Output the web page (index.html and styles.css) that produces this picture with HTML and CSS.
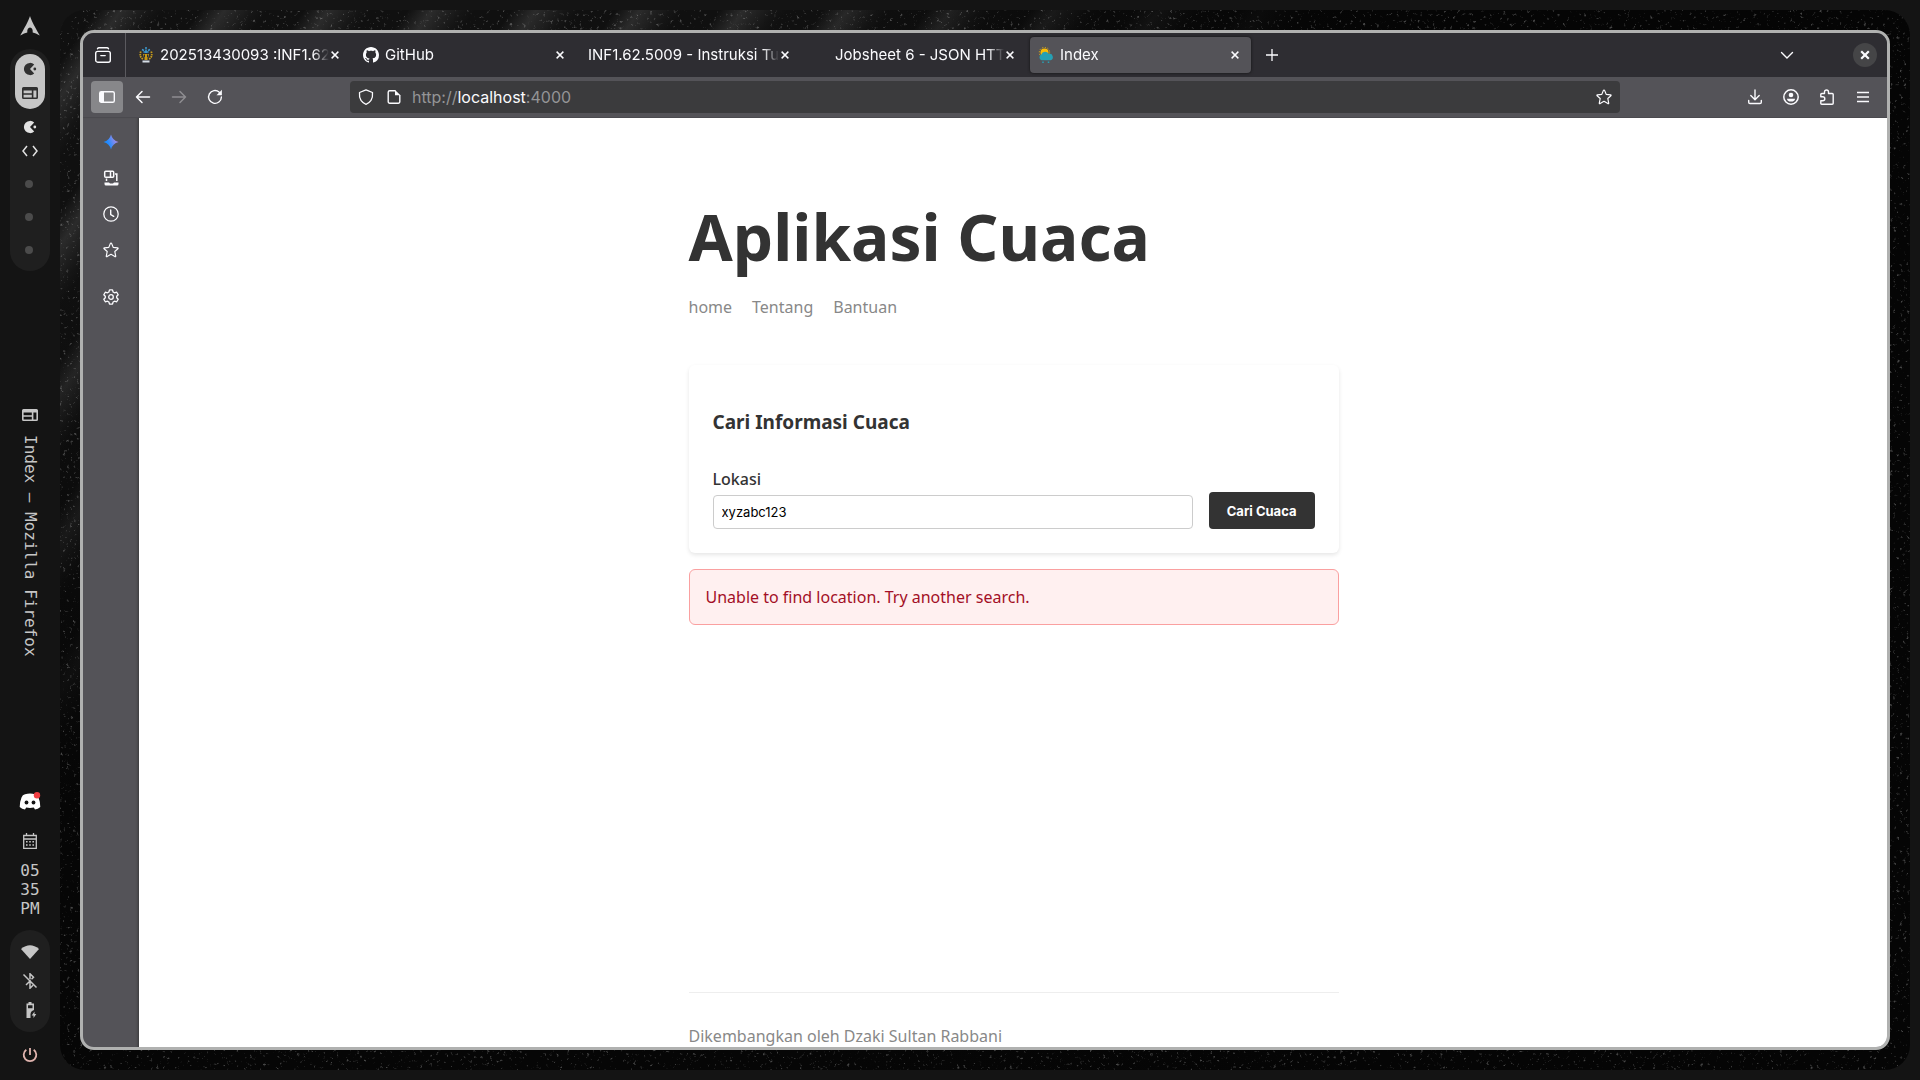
FILE: index.html
```html
<!DOCTYPE html>
<html lang="id">
<head>
<meta charset="utf-8">
<meta name="viewport" content="width=device-width, initial-scale=1">
<title>Index</title>
<link rel="stylesheet" href="styles.css">
</head>
<body class="desktop">
<svg class="defs" width="0" height="0" aria-hidden="true">
  <symbol id="i-close" viewBox="0 0 16 16"><path d="M3.500 3.500l9 9M12.500 3.500l-9 9" fill="none" stroke="currentColor" stroke-width="1.900"/></symbol>
  <symbol id="i-star" viewBox="0 0 16 16"><path d="M8 1.100Q8.500 1.100 8.700 1.600L10.200 5.400 14.600 5.800Q15.500 6 14.900 6.700L11.800 9.500 12.700 14Q12.800 15 11.900 14.600L8 12.300 4.100 14.600Q3.200 15 3.300 14L4.200 9.500 1.100 6.700Q.5 6 1.400 5.800L5.800 5.400 7.300 1.600Q7.500 1.100 8 1.100z" fill="none" stroke="currentColor" stroke-width="1.200" stroke-linejoin="round"/></symbol>
  <symbol id="i-pac" viewBox="0 0 16 16"><path d="M12.800 2.900A7 7 0 1 0 12.800 13.100L8 8z" fill="currentColor"/><circle cx="13.500" cy="8" r="1.600" fill="currentColor"/></symbol>
  <symbol id="i-web" viewBox="0 0 16 16"><path d="M1.500 2h13A1.500 1.500 0 0 1 16 3.500v9a1.500 1.500 0 0 1-1.500 1.500h-13A1.500 1.500 0 0 1 0 12.500v-9A1.500 1.500 0 0 1 1.500 2zM1.600 5.600v2.600h8.200V5.600zm0 4.100v2.700h8.200V9.700zm9.800-4.100v6.800h3V5.600z" fill="currentColor" fill-rule="evenodd"/></symbol>
</svg>

<aside class="bar">
  <div class="bar-group">
    <svg class="ic-20 arch" viewBox="0 0 20 20"><path d="M10 0C9 3 7.500 7 .2 19.500 3 17.800 5.200 16.800 7.300 16.400 7 14 8 11.600 10 11.600S13 14 12.700 16.400C14.800 16.800 17 17.800 19.800 19.500 12.500 7 11 3 10 0z" fill="currentColor"/></svg>
    <div class="workspaces">
      <div class="ws ws-active"><svg class="ic-14"><use href="#i-pac"/></svg><svg class="ic-16"><use href="#i-web"/></svg></div>
      <div class="ws"><svg class="ic-14"><use href="#i-pac"/></svg><svg class="ic-16" viewBox="0 0 16 16"><path d="M5 3L1 8l4 5M11 3l4 5-4 5" fill="none" stroke="currentColor" stroke-width="1.500"/></svg></div>
      <i class="dot"></i><i class="dot"></i><i class="dot"></i>
    </div>
  </div>
  <div class="task">
    <svg class="ic-16"><use href="#i-web"/></svg>
    <span class="task-title">Index — Mozilla Firefox</span>
  </div>
  <div class="bar-group">
    <svg class="ic-22 discord" viewBox="0 0 22 18"><path d="M6 2.200Q11 .6 16 2.200 18.500 2.500 19.500 5.500 21.500 10.500 21.300 15 19 17 16 17.500L14.800 15.600Q11 16.400 7.200 15.600L6 17.500Q3 17 .7 15 .5 10.500 2.500 5.500 3.500 2.500 6 2.200z" fill="#fff"/><circle cx="7.500" cy="10.500" r="1.900" fill="#141414"/><circle cx="14.500" cy="10.500" r="1.900" fill="#141414"/><circle cx="18" cy="3.200" r="3.200" fill="#f23f43"/></svg>
    <svg class="ic-16 calendar" viewBox="0 0 16 16"><path d="M1.700 2.500h12.600v12.800H1.700zM1.700 6h12.600M4.500 0v3M11.500 0v3" fill="none" stroke="currentColor" stroke-width="1.300"/><path d="M4 8.800h8M4 12h8" stroke="currentColor" stroke-width="1.500" stroke-dasharray="1.600 1.600"/></svg>
    <time class="clock"><span>05</span><span>35</span><span>PM</span></time>
    <div class="status">
      <svg class="ic-18" viewBox="0 0 18 16"><path d="M0 5Q9-2.500 18 5L9 15z" fill="currentColor"/></svg>
      <svg class="ic-16" viewBox="0 0 16 16"><path d="M1.500 1.500l13 13M8 6V.8l3.500 3.400-2 2M4 12l4-4v7.200l3-3" fill="none" stroke="currentColor" stroke-width="1.500"/></svg>
      <svg class="ic-16" viewBox="0 0 16 16"><path d="M6.500 0h3v1.500H12V8Q8.700 9 8.500 12v4H4.500V1.500h2zM6 3.200v3h4.500v-3z" fill="currentColor" fill-rule="evenodd"/><path d="M12.500 9.500L9.700 13.500h1.800v2.500l2.800-4h-1.800z" fill="currentColor"/></svg>
    </div>
    <svg class="ic-16 power" viewBox="0 0 16 16"><path d="M8 1v7M4.300 2.800a6.300 6.300 0 1 0 7.400 0" fill="none" stroke="currentColor" stroke-width="1.800"/></svg>
  </div>
</aside>

<div class="wallpaper">
  <svg class="grain" aria-hidden="true"><filter id="grain"><feTurbulence type="fractalNoise" baseFrequency="0.3" numOctaves="3" seed="7"/><feColorMatrix values="0 0 0 0 .7  0 0 0 0 .7  0 0 0 0 .7  5 0 0 0 -3.200"/></filter><rect width="100%" height="100%" filter="url(#grain)"/></svg>
  <div class="window">
    <header class="tabstrip">
      <button class="view" aria-label="Firefox View"><svg class="ic-16" viewBox="0 0 16 16"><rect x=".7" y="4.400" width="14.600" height="10.800" rx="2" fill="none" stroke="currentColor" stroke-width="1.400"/><path d="M2.500 1.800Q3 .8 4 .8h8q1 0 1.500 1M5.800 8.600h4.400" fill="none" stroke="currentColor" stroke-width="1.400" stroke-linecap="round"/></svg></button>
      <nav class="tabs">
        <div class="tab"><svg class="ic-16" viewBox="0 0 16 16"><path d="M4 2.500l2 1M7 1h2M10 3.500l2-1M5.500 5h5M8 2.500V6" stroke="#3d9bd1" stroke-width="1.500"/><path d="M2.800 4.500Q1 10 5 12M13.200 4.500Q15 10 11 12" fill="none" stroke="#c49a1c" stroke-width="1.800" stroke-dasharray="1.500 .8"/><path d="M5 7h6l-1 4H6zM6.500 11h3v2h-3z" fill="#c99a13"/><path d="M6.500 7.500v3M9.500 7.500v3" stroke="#27313a"/><path d="M4.500 14.500h7" stroke="#d6dde5" stroke-width="1.800"/></svg><span class="tab-label">202513430093 :INF1.62</span><button class="tab-close" aria-label="Close tab"><svg class="ic-12"><use href="#i-close"/></svg></button></div>
        <div class="tab"><svg class="ic-16" viewBox="0 0 16 16"><path fill="currentColor" d="M8 0C3.580 0 0 3.580 0 8c0 3.540 2.290 6.530 5.470 7.590.4.070.55-.17.55-.38 0-.19-.01-.82-.01-1.490-2.010.37-2.530-.49-2.690-.94-.09-.23-.48-.94-.82-1.130-.28-.15-.68-.52-.01-.53.63-.01 1.080.58 1.230.82.72 1.210 1.870.87 2.330.66.07-.52.28-.87.51-1.070-1.780-.2-3.640-.89-3.640-3.950 0-.87.31-1.590.82-2.150-.08-.2-.36-1.020.08-2.120 0 0 .67-.21 2.200.82.64-.18 1.320-.27 2-.27s1.360.09 2 .27c1.530-1.040 2.200-.82 2.200-.82.44 1.100.16 1.920.08 2.120.51.56.82 1.270.82 2.150 0 3.070-1.870 3.750-3.650 3.950.29.25.54.73.54 1.480 0 1.070-.01 1.930-.01 2.200 0 .21.15.46.55.38A8.010 8.010 0 0 0 16 8c0-4.420-3.580-8-8-8z"/></svg><span class="tab-label">GitHub</span><button class="tab-close" aria-label="Close tab"><svg class="ic-12"><use href="#i-close"/></svg></button></div>
        <div class="tab"><span class="tab-label">INF1.62.5009 - Instruksi Tug</span><button class="tab-close" aria-label="Close tab"><svg class="ic-12"><use href="#i-close"/></svg></button></div>
        <div class="tab"><svg class="ic-16"></svg><span class="tab-label">Jobsheet 6 - JSON HTT</span><button class="tab-close" aria-label="Close tab"><svg class="ic-12"><use href="#i-close"/></svg></button></div>
        <div class="tab tab-active"><svg class="ic-16" viewBox="0 0 16 16"><circle cx="6.500" cy="5.500" r="4" fill="#fbbc04"/><circle cx="6.500" cy="5.500" r="5.200" fill="none" stroke="#fbbc04" stroke-dasharray="1 1.700"/><path d="M3.500 13.200A3 3 0 0 1 3.300 7.600 4 4 0 0 1 10.700 7 3.200 3.200 0 0 1 12.500 13.200z" fill="#26a0b4"/><path d="M5 14.500v1.500M10.500 14.500v1.500" stroke="#26a0b4" stroke-width="1.500"/></svg><span class="tab-label">Index</span><button class="tab-close" aria-label="Close tab"><svg class="ic-12"><use href="#i-close"/></svg></button></div>
      </nav>
      <button class="tool" aria-label="New tab"><svg class="ic-16" viewBox="0 0 16 16"><path d="M8 2v12M2 8h12" stroke="currentColor" stroke-width="1.300"/></svg></button>
      <button class="tool all-tabs" aria-label="List all tabs"><svg class="ic-16" viewBox="0 0 16 16"><path d="M2.500 5.500L8 11l5.500-5.500" fill="none" stroke="currentColor" stroke-width="1.400" stroke-linecap="round"/></svg></button>
      <button class="win-close" aria-label="Close window"><svg class="ic-12" viewBox="0 0 12 12"><path d="M2.200 2.200l7.600 7.600M9.800 2.200l-7.600 7.600" stroke="currentColor" stroke-width="2.200"/></svg></button>
    </header>

    <div class="toolbar">
      <div class="tools">
        <button class="tool tool-on" aria-label="Sidebar"><svg class="ic-16" viewBox="0 0 16 16"><rect x=".7" y="2.700" width="14.600" height="10.600" rx="1.600" fill="none" stroke="currentColor" stroke-width="1.400"/><path d="M1 3h4v10H1z" fill="currentColor"/></svg></button>
        <button class="tool" aria-label="Back"><svg class="ic-16" viewBox="0 0 16 16"><path d="M14.500 8H1.500M7 2.500L1.500 8 7 13.500" fill="none" stroke="currentColor" stroke-width="1.500" stroke-linecap="round" stroke-linejoin="round"/></svg></button>
        <button class="tool" aria-label="Forward" disabled><svg class="ic-16" viewBox="0 0 16 16"><path d="M1.500 8h13M9 2.500L14.500 8 9 13.500" fill="none" stroke="currentColor" stroke-width="1.500" stroke-linecap="round" stroke-linejoin="round"/></svg></button>
        <button class="tool" aria-label="Reload"><svg class="ic-16" viewBox="0 0 16 16"><path d="M12.300 3.200A6.400 6.400 0 1 0 14.400 8" fill="none" stroke="currentColor" stroke-width="1.400" stroke-linecap="round"/><path d="M14.900.8v5.400H9.500z" fill="currentColor"/></svg></button>
      </div>
      <div class="urlbar">
        <svg class="ic-16" viewBox="0 0 16 16"><path d="M8 .8L14.500 3.500Q15 8 13 11.400 11 14.300 8 15.300 5 14.300 3 11.400 1 8 1.500 3.500z" fill="none" stroke="currentColor" stroke-width="1.300" stroke-linejoin="round"/></svg>
        <svg class="ic-16" viewBox="0 0 16 16"><path d="M9.500 1.700H3.700a1.500 1.500 0 0 0-1.500 1.500v9.600a1.500 1.500 0 0 0 1.500 1.500h8.600a1.500 1.500 0 0 0 1.500-1.500V6" fill="none" stroke="currentColor" stroke-width="1.400"/><path d="M9 1v5.300h5.500z" fill="currentColor"/></svg>
        <span class="url">http://<b class="host">localhost</b>:4000</span>
        <svg class="ic-16"><use href="#i-star"/></svg>
      </div>
      <div class="tools tools-end">
        <button class="tool" aria-label="Downloads"><svg class="ic-16" viewBox="0 0 16 16"><path d="M8 1v9.500M3.800 6.500L8 10.700l4.200-4.200M1.700 11.500v1.700q0 1.300 1.300 1.300h10q1.300 0 1.300-1.300v-1.700" fill="none" stroke="currentColor" stroke-width="1.400" stroke-linecap="round" stroke-linejoin="round"/></svg></button>
        <button class="tool" aria-label="Account"><svg class="ic-16" viewBox="0 0 16 16"><circle cx="8" cy="8" r="7.200" fill="none" stroke="currentColor" stroke-width="1.500"/><circle cx="8" cy="6" r="2.300" fill="currentColor"/><path d="M4 9.800h8q0 2.800-4 2.800T4 9.800z" fill="currentColor"/></svg></button>
        <button class="tool" aria-label="Extensions"><svg class="ic-16" viewBox="0 0 16 16"><path d="M5.500 4.500V3a2 2 0 0 1 4 0v1.500h3.700q1 0 1 1v8.700q0 1-1 1H2.800q-1 0-1-1v-2.500h2a1.500 1.500 0 0 0 0-4h-2V5.500q0-1 1-1z" fill="none" stroke="currentColor" stroke-width="1.400" stroke-linejoin="round"/></svg></button>
        <button class="tool" aria-label="Menu"><svg class="ic-16" viewBox="0 0 16 16"><path d="M2 3.500h12M2 8h12M2 12.500h12" stroke="currentColor" stroke-width="1.300"/></svg></button>
      </div>
    </div>

    <div class="view-area">
      <nav class="sidebar">
        <button class="side" aria-label="AI chatbot"><svg class="ic-16" viewBox="0 0 16 16"><defs><linearGradient id="spark" x1="0" x2="1" y1=".7" y2=".3"><stop offset=".3" stop-color="#1f8bff"/><stop offset="1" stop-color="#c58be0"/></linearGradient></defs><path d="M8 .5Q9.500 6.500 15.500 8 9.500 9.500 8 15.500 6.500 9.500 .5 8 6.500 6.500 8 .5z" fill="url(#spark)"/></svg></button>
        <button class="side" aria-label="Synced tabs"><svg class="ic-16" viewBox="0 0 16 16"><rect x="1.700" y="1.200" width="9" height="6" rx="1" fill="none" stroke="currentColor" stroke-width="1.500"/><path d="M7.500 1v6M3.500 8.500v2.500M12 4h1.800v7" fill="none" stroke="currentColor" stroke-width="1.500"/><path d="M1.500 12.500h4.500l1 1h3l1-1h4.500v1.500q0 1.500-1.500 1.500h-11q-1.500 0-1.500-1.500z" fill="currentColor"/></svg></button>
        <button class="side" aria-label="History"><svg class="ic-16" viewBox="0 0 16 16"><circle cx="8" cy="8" r="7.200" fill="none" stroke="currentColor" stroke-width="1.300"/><path d="M7.700 4v4.500l3 1.800" fill="none" stroke="currentColor" stroke-width="1.400" stroke-linecap="round"/></svg></button>
        <button class="side" aria-label="Bookmarks"><svg class="ic-16"><use href="#i-star"/></svg></button>
        <button class="side side-last" aria-label="Settings"><svg class="ic-16" viewBox="0 0 16 16"><path d="M6.500.8h3l.6 2.200 1.400.8 2.200-.6 1.500 2.600L13.700 7.300v1.400l1.500 1.500-1.500 2.600-2.200-.6-1.400.8-.6 2.200h-3L5.900 13l-1.400-.8-2.200.6L.8 10.200 2.300 8.700V7.300L.8 5.800 2.300 3.200l2.200.6L5.900 3z" fill="none" stroke="currentColor" stroke-width="1.300" stroke-linejoin="round"/><circle cx="8" cy="8" r="2.300" fill="none" stroke="currentColor" stroke-width="1.300"/></svg></button>
      </nav>
      <div class="page">
        <div class="content">
          <header class="site-header">
            <h1 class="site-title">Aplikasi Cuaca</h1>
            <nav class="site-nav"><a href="#">home</a><a href="#">Tentang</a><a href="#">Bantuan</a></nav>
          </header>
          <main class="main">
            <form class="card">
              <h3 class="card-title">Cari Informasi Cuaca</h3>
              <div class="form-row">
                <div class="field"><label for="lokasi">Lokasi</label><input id="lokasi" type="text" value="xyzabc123"></div>
                <button class="submit" type="button">Cari Cuaca</button>
              </div>
            </form>
            <div class="alert" role="alert">Unable to find location. Try another search.</div>
          </main>
          <footer class="site-footer">Dikembangkan oleh Dzaki Sultan Rabbani</footer>
        </div>
      </div>
    </div>
  </div>
</div>
</body>
</html>
```
FILE: styles.css
```css
* { box-sizing: border-box; }
button, input { font-family: Inter, "Noto Sans", sans-serif; }
button { border: 0; padding: 0; background: none; color: inherit; }
svg { display: block; flex: none; }
.defs { position: absolute; }
.ic-12 { width: 12px; height: 12px; }
.ic-14 { width: 14px; height: 14px; }
.ic-16 { width: 16px; height: 16px; }
.ic-18 { width: 18px; height: 16px; }
.ic-20 { width: 20px; height: 20px; }
.ic-22 { width: 22px; height: 18px; }

.desktop {
  margin: 0;
  height: 100vh;
  display: flex;
  overflow: hidden;
  background: #141414;
  color: #fbfbfe;
  font-family: Inter, "Noto Sans", sans-serif;
  font-size: 15px;
}

/* Desktop bar */
.bar {
  width: 60px;
  flex: none;
  padding: 16px 0 17px;
  display: flex;
  flex-direction: column;
  justify-content: space-between;
  align-items: center;
  color: #c6c6c6;
}
.bar-group { display: flex; flex-direction: column; align-items: center; }
.workspaces {
  width: 40px;
  margin-top: 13px;
  padding: 5px 0 17px;
  border-radius: 20px;
  background: #1f1f1f;
  display: flex;
  flex-direction: column;
  align-items: center;
}
.ws {
  width: 30px;
  padding: 8px 0;
  display: flex;
  flex-direction: column;
  align-items: center;
  gap: 9px;
  color: #e2e2e2;
}
.ws-active { border-radius: 15px; background: #c6c6c6; color: #303030; margin-bottom: 3px; }
.dot { width: 8px; height: 8px; margin: 13px 2px 12px 0; border-radius: 50%; background: #4b4b4b; }
.dot:last-child { margin-bottom: 0; }
.task { display: flex; flex-direction: column; align-items: center; gap: 12px; }
.task-title {
  writing-mode: vertical-rl;
  font-family: "DejaVu Sans Mono", monospace;
  font-size: 16px;
  line-height: 20px;
  white-space: nowrap;
}
.calendar { margin-top: 23px; }
.clock {
  margin-top: 12px;
  display: flex;
  flex-direction: column;
  font-family: "DejaVu Sans Mono", monospace;
  font-size: 16px;
  line-height: 19px;
}
.status {
  width: 40px;
  margin: 12px 0 15px;
  padding: 14px 0;
  border-radius: 20px;
  background: #1f1f1f;
  display: flex;
  flex-direction: column;
  align-items: center;
  gap: 13px;
}
.power { color: #e0b4ae; }

/* Wallpaper and window frame */
.wallpaper {
  flex: 1;
  min-width: 0;
  margin: 10px 10px 10px 0;
  padding: 20px;
  border-radius: 25px;
  position: relative;
  overflow: hidden;
  background:
    linear-gradient(to right, transparent 40%, #050505 70%),
    linear-gradient(to bottom, transparent 25%, #060606 75%),
    repeating-linear-gradient(125deg, #101010 0 30px, #2b2b2b 50px, #151515 75px, #101010 85px);
}
.grain { position: absolute; inset: 0; width: 100%; height: 100%; opacity: .3; }
.window {
  height: 100%;
  position: relative;
  display: flex;
  flex-direction: column;
  overflow: hidden;
  border: 3px solid #b0b1b0;
  border-radius: 14px;
  background: #545358;
}

/* Tabs */
.tabstrip { height: 44px; flex: none; display: flex; align-items: center; background: #2e2d32; padding-right: 10px; }
.view { align-self: stretch; width: 43px; padding-left: 12px; border-right: 1px solid #5b5a5f; }
.tabs { display: flex; gap: 4px; padding: 0 5px 0 4px; }
.tab {
  width: 221px;
  height: 36px;
  padding: 0 6px 0 8px;
  display: flex;
  align-items: center;
  gap: 6px;
  border-radius: 4px;
}
.tab-active { background: #545358; box-shadow: 0 0 3px #111; }
.tab-label {
  flex: 1;
  min-width: 0;
  margin-right: -10px;
  overflow: hidden;
  white-space: nowrap;
  line-height: 20px;
  mask-image: linear-gradient(to left, transparent, #000 16px);
}
.tab-close { width: 20px; height: 20px; display: grid; place-items: center; }
.tool { width: 32px; height: 32px; display: grid; place-items: center; border-radius: 4px; }
.tool:disabled { color: #8e8d91; }
.tool-on { background: #87878a; }
.all-tabs { margin-left: auto; }
.win-close { width: 24px; height: 24px; margin-left: 50px; display: grid; place-items: center; border-radius: 50%; background: #454547; }

/* Toolbar */
.toolbar { height: 41px; flex: none; padding: 4px 8px 0; display: flex; border-bottom: 1px solid #4b4a4f; }
.tools { display: flex; gap: 4px; }
.tools-end { margin-left: auto; }
.urlbar {
  flex: 1;
  height: 32px;
  margin: 0 119px;
  padding: 0 8px;
  display: flex;
  align-items: center;
  gap: 12px;
  border-radius: 4px;
  background: #3b3b3d;
}
.url { flex: 1; margin-left: -2px; font-size: 16px; line-height: 20px; color: #949496; }
.host { font-weight: 400; color: #fbfbfe; }

/* Sidebar */
.view-area { flex: 1; min-height: 0; display: flex; }
.sidebar {
  width: 56px;
  flex: none;
  padding-top: 8px;
  display: flex;
  flex-direction: column;
  align-items: center;
  gap: 4px;
  box-shadow: inset -3px 0 3px -2px #3a3a3a;
}
.side { width: 32px; height: 32px; display: grid; place-items: center; }
.side-last { margin-top: 11px; }

/* Weather page */
.page {
  flex: 1;
  min-width: 0;
  padding-left: 1px;
  overflow: hidden;
  background: #fff;
  color: #333;
  font-family: "Noto Sans", sans-serif;
  font-size: 16px;
  line-height: 22px;
}
.content { max-width: 650px; min-height: 100%; margin: 0 auto; padding-top: 75px; display: flex; flex-direction: column; }
.site-header { margin-bottom: 47px; }
.site-title { margin: 0 0 15px; font-size: 64px; line-height: 88px; font-weight: 700; }
.site-nav { display: flex; gap: 20px; }
.site-nav a { color: #888; text-decoration: none; }
.main { flex: 1; }
.card { padding: 24px; border-radius: 6px; box-shadow: 0 2px 4px rgba(0, 0, 0, .1); }
.card-title { margin: 20px 0 33px; font-size: 19px; line-height: 26px; }
.form-row { display: flex; align-items: flex-end; gap: 16px; }
.field { flex: 1; display: flex; flex-direction: column; gap: 5px; font-weight: 500; }
.field input { height: 34px; padding: 0 8px; border: 1px solid #ccc; border-radius: 4px; background: #fff; color: #000; font-size: 13px; }
.submit { height: 37px; padding: 0 18px; border-radius: 4px; background: #333; color: #fff; font-size: 13px; font-weight: 700; }
.alert { margin-top: 16px; padding: 16px; border: 1px solid #faa0a0; border-radius: 6px; background: #fff0f0; color: #a30f26; }
.site-footer { padding-top: 32px; border-top: 1px solid #eee; color: #888; }
```
